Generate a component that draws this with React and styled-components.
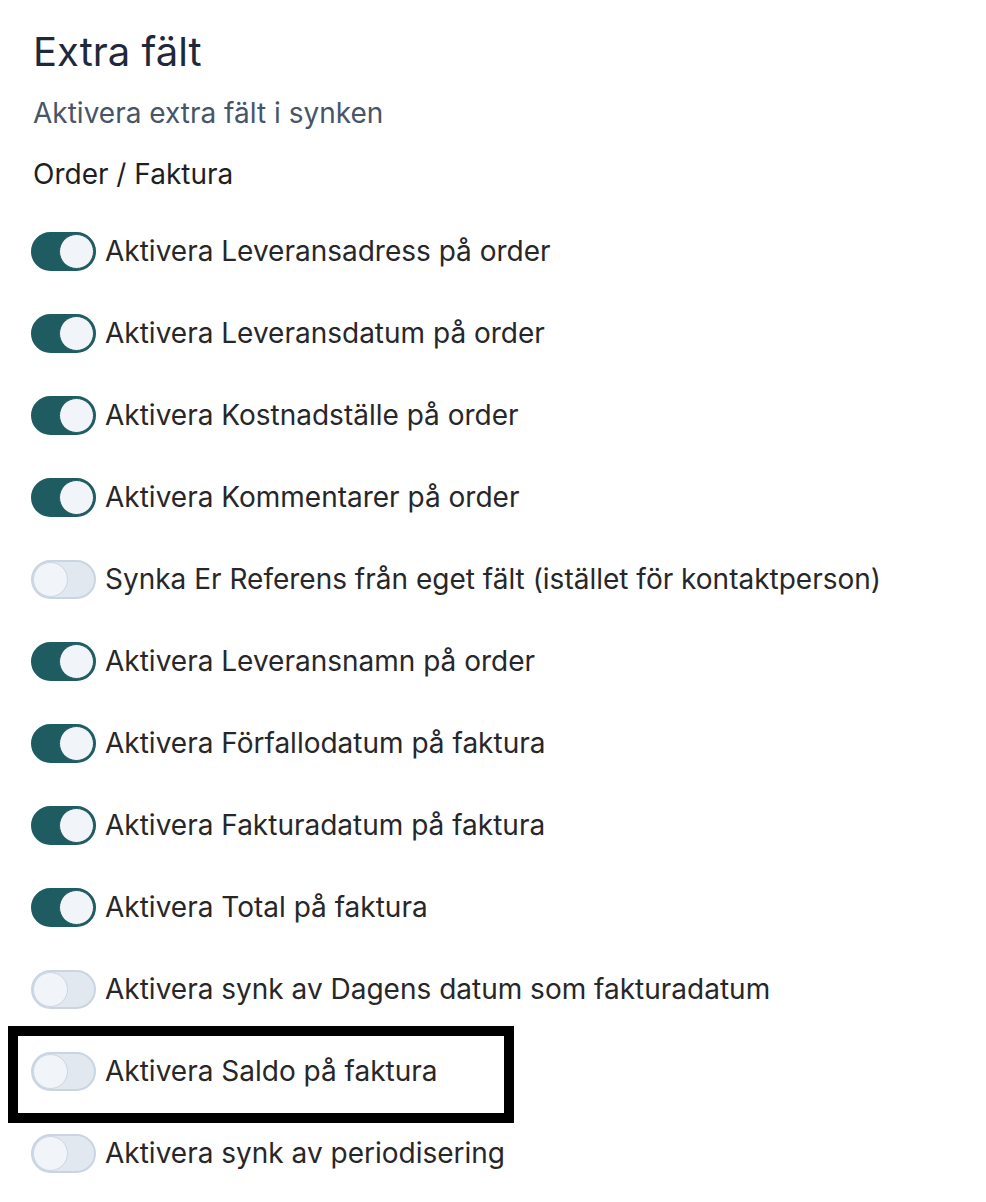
import React, { useState } from "react";
import styled, { createGlobalStyle } from "styled-components";

const Global = createGlobalStyle`
  html, body { margin: 0; padding: 0; background: #ffffff; }
  body { font-family: Inter, "Noto Sans", sans-serif; -webkit-font-smoothing: antialiased; }
`;

const Page = styled.div`
  padding: 26px 0 0 33px;
  display: flex;
  flex-direction: column;
`;

const Title = styled.h1`
  margin: 0;
  font-size: 40px;
  line-height: 52px;
  font-weight: 400;
  color: #1e293b;
`;

const Subtitle = styled.p`
  margin: 18px 0 0;
  font-size: 28px;
  line-height: 34px;
  color: #475569;
`;

const SectionLabel = styled.div`
  margin-top: 27px;
  font-size: 28px;
  line-height: 34px;
  color: #1f1f23;
`;

const List = styled.div`
  margin-top: 40px;
  display: flex;
  flex-direction: column;
  gap: 42px;
`;

const RowWrap = styled.div`
  position: relative;
  margin-left: -2px;
`;

const Row = styled.label`
  display: flex;
  align-items: center;
  gap: 9px;
  height: 40px;
  cursor: pointer;
`;

const Track = styled.span`
  box-sizing: border-box;
  width: 65px;
  height: 39px;
  border-radius: 20px;
  border: 2px solid ${(p) => (p.$on ? "#1e5c62" : "#cbd5e1")};
  background: ${(p) => (p.$on ? "#1e5c62" : "#e2e8f0")};
  display: flex;
  align-items: center;
  justify-content: ${(p) => (p.$on ? "flex-end" : "flex-start")};
  flex-shrink: 0;
`;

const Knob = styled.span`
  box-sizing: border-box;
  width: 35px;
  height: 35px;
  border-radius: 50%;
  background: #f1f5f9;
  border: 1.5px solid ${(p) => (p.$on ? "#1e5c62" : "#cbd5e1")};
`;

const LabelText = styled.span`
  font-size: 28px;
  color: #27272a;
  white-space: nowrap;
`;

const Highlight = styled.div`
  position: absolute;
  left: -23px;
  top: -25px;
  width: 506px;
  height: 97px;
  box-sizing: border-box;
  border: 10px solid #000;
  pointer-events: none;
`;

const initial = [
  ["Aktivera Leveransadress på order", true],
  ["Aktivera Leveransdatum på order", true],
  ["Aktivera Kostnadställe på order", true],
  ["Aktivera Kommentarer på order", true],
  ["Synka Er Referens från eget fält (istället för kontaktperson)", false],
  ["Aktivera Leveransnamn på order", true],
  ["Aktivera Förfallodatum på faktura", true],
  ["Aktivera Fakturadatum på faktura", true],
  ["Aktivera Total på faktura", true],
  ["Aktivera synk av Dagens datum som fakturadatum", false],
  ["Aktivera Saldo på faktura", false, true],
  ["Aktivera synk av periodisering", false],
];

export default function App() {
  const [items, setItems] = useState(initial);
  const toggle = (i) =>
    setItems((prev) => prev.map((it, j) => (j === i ? [it[0], !it[1], it[2]] : it)));
  return (
    <>
      <Global />
      <Page>
        <Title>Extra fält</Title>
        <Subtitle>Aktivera extra fält i synken</Subtitle>
        <SectionLabel>Order / Faktura</SectionLabel>
        <List>
          {items.map(([label, on, hl], i) => (
            <RowWrap key={label}>
              <Row onClick={() => toggle(i)}>
                <Track $on={on}>
                  <Knob $on={on} />
                </Track>
                <LabelText>{label}</LabelText>
              </Row>
              {hl && <Highlight />}
            </RowWrap>
          ))}
        </List>
      </Page>
    </>
  );
}
